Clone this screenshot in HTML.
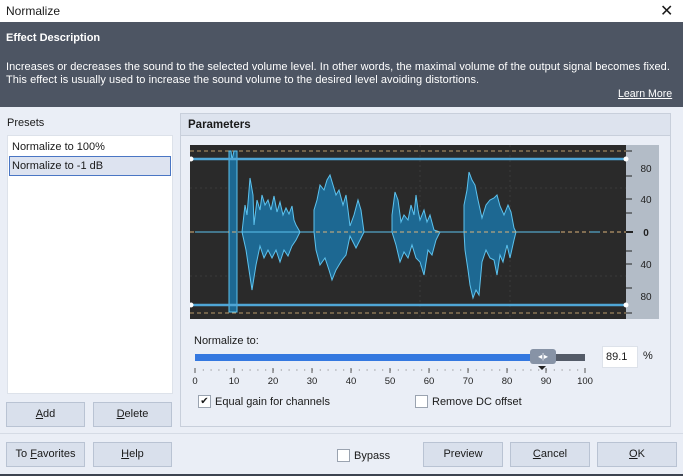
<!DOCTYPE html>
<html><head><meta charset="utf-8"><style>
*{box-sizing:border-box;margin:0;padding:0}
body{width:683px;height:476px;overflow:hidden;background:#eaeef6;font-family:"Liberation Sans",sans-serif;font-size:11px;color:#1a1a1a;position:relative}
.abs{position:absolute}
.btn{position:absolute;background:#d9e0ec;border:1px solid #b9c3d3;text-align:center;line-height:23px;font-size:11px}
u{text-decoration:underline}
.cb{position:absolute;width:13px;height:13px;background:#fff;border:1px solid #9aa3b0}
</style></head><body>
<div class="abs" style="left:0;top:0;width:683px;height:22px;background:#fff"></div>
<div class="abs" style="left:6px;top:4px;font-size:12px">Normalize</div>
<div class="abs" style="left:660px;top:1px;font-size:16px;font-weight:300">✕</div>
<div class="abs" style="left:0;top:22px;width:683px;height:85px;background:#4d5563;color:#fff">
 <div class="abs" style="left:6px;top:10px;font-weight:bold;font-size:11px">Effect Description</div>
 <div class="abs" style="left:6px;top:39px;line-height:13px;font-size:11px;white-space:nowrap;letter-spacing:0.05px">Increases or decreases the sound to the selected volume level. In other words, the maximal volume of the output signal becomes fixed.<br>This effect is usually used to increase the sound volume to the desired level avoiding distortions.</div>
 <div class="abs" style="left:618px;top:66px;text-decoration:underline;font-size:10.6px">Learn More</div>
</div>
<div class="abs" style="left:7px;top:117px">Presets</div>
<div class="abs" style="left:7px;top:135px;width:166px;height:259px;background:#fff;border:1px solid #dde2ea"></div>
<div class="abs" style="left:12px;top:141px">Normalize to 100%</div>
<div class="abs" style="left:9px;top:156px;width:162px;height:20px;background:#dde3f0;border:1px solid #4a76c4;padding:3px 2px">Normalize to -1 dB</div>
<div class="btn" style="left:6px;top:402px;width:79px;height:25px"><u>A</u>dd</div>
<div class="btn" style="left:93px;top:402px;width:79px;height:25px"><u>D</u>elete</div>
<div class="abs" style="left:180px;top:113px;width:491px;height:314px;border:1px solid #c8cfdb"></div>
<div class="abs" style="left:181px;top:114px;width:489px;height:22px;background:#dde3ee;border-bottom:1px solid #c8cfdb;font-weight:bold;font-size:11.5px;padding:5px 7px">Parameters</div>
<svg class="abs" style="left:190px;top:145px" width="470" height="175" viewBox="190 145 470 175">
<rect x="190" y="145" width="436" height="174" fill="#2a2a2a"/>
<rect x="626" y="145" width="33" height="174" fill="#b3bcc7"/>
<g stroke="#3a3a3a" stroke-dasharray="2 3"><line x1="190" y1="188" x2="626" y2="188"/><line x1="190" y1="276" x2="626" y2="276"/><line x1="420" y1="145" x2="420" y2="319"/><line x1="510" y1="145" x2="510" y2="319"/></g>
<g stroke="#b89a6a" stroke-dasharray="4 3"><line x1="190" y1="151" x2="626" y2="151"/><line x1="190" y1="313" x2="626" y2="313"/></g>
<path d="M242 232 L245 205 L247 215 L250 178 L253 195 L254 225 L257 200 L260 210 L262 195 L265 205 L268 200 L271 210 L274 196 L277 212 L280 202 L283 215 L286 208 L289 214 L292 206 L294 220 L296 225 L300 232 L296 240 L292 246 L288 256 L284 250 L280 262 L276 250 L272 258 L268 250 L264 258 L260 246 L256 265 L252 290 L249 270 L246 250 Z
M314 232 L314 210 L317 200 L320 185 L324 190 L327 180 L330 175 L333 185 L336 195 L339 190 L343 205 L346 195 L348 210 L350 226 L354 215 L358 200 L361 210 L364 232 L360 240 L356 248 L350 236 L346 255 L342 260 L339 265 L336 270 L332 280 L329 270 L325 258 L320 265 L316 250 Z
M392 232 L392 215 L395 192 L398 200 L401 222 L404 215 L408 220 L411 205 L414 215 L416 195 L418 210 L420 220 L424 210 L427 222 L430 215 L434 230 L440 232 L436 240 L432 255 L428 250 L424 275 L420 262 L416 258 L412 245 L408 258 L404 252 L400 262 L396 245 Z
M464 232 L464 205 L467 190 L469 172 L472 180 L475 185 L478 200 L482 218 L486 205 L490 200 L494 198 L497 195 L500 206 L504 215 L508 205 L511 212 L514 228 L516 232 L514 240 L510 258 L507 245 L503 262 L500 255 L497 275 L494 260 L490 258 L486 250 L482 262 L479 295 L476 290 L473 298 L470 285 L468 270 L465 250 Z" fill="#1d6892" stroke="#5cc2ee" stroke-width="1"/>
<path d="M229 151 L231 151 L232 160 L234 151 L237 151 L237 312 L229 312 Z" fill="#1d6892" stroke="#5cc2ee"/>
<line x1="190" y1="232" x2="626" y2="232" stroke="#d9b27a" stroke-dasharray="4 3"/>
<path d="M195 232 L228 232 M238 232 L314 232 M364 232 L392 232 M440 232 L464 232 M516 232 L560 232 M590 232 L600 232" stroke="#5cc2ee" stroke-width="1"/>
<line x1="190" y1="159" x2="626" y2="159" stroke="#4fa6d6" stroke-width="2.5"/>
<line x1="190" y1="305" x2="626" y2="305" stroke="#4fa6d6" stroke-width="2.5"/>
<circle cx="191" cy="159" r="2.5" fill="#fff"/><circle cx="626" cy="159" r="2.5" fill="#fff"/>
<circle cx="191" cy="305" r="2.5" fill="#fff"/><circle cx="626" cy="305" r="2.5" fill="#fff"/>
<g stroke="#222"><line x1="626" y1="151" x2="632" y2="151"/><line x1="626" y1="176" x2="632" y2="176"/><line x1="626" y1="199" x2="632" y2="199"/><line x1="626" y1="213" x2="632" y2="213"/><line x1="626" y1="232" x2="633" y2="232" stroke-width="2"/><line x1="626" y1="251" x2="632" y2="251"/><line x1="626" y1="264" x2="632" y2="264"/><line x1="626" y1="288" x2="632" y2="288"/><line x1="626" y1="313" x2="632" y2="313"/></g>
<g font-family="Liberation Sans" font-size="10" fill="#222" text-anchor="middle"><text x="646" y="172">80</text><text x="646" y="203">40</text><text x="646" y="236" font-weight="bold">0</text><text x="646" y="268">40</text><text x="646" y="300">80</text></g>
</svg>
<div class="abs" style="left:194px;top:335px">Normalize to:</div>
<div class="abs" style="left:195px;top:354px;width:390px;height:7px;background:#545b68"></div>
<div class="abs" style="left:195px;top:354px;width:340px;height:7px;background:#3478e0"></div>
<div class="abs" style="left:530px;top:349px;width:26px;height:15px;background:#8793a6;border-radius:3px;color:#fff;font-size:8px;text-align:center;line-height:15px">◂|▸</div>
<svg class="abs" style="left:190px;top:366px" width="410" height="24">
<g stroke="#555">
<line x1="5" y1="2" x2="5" y2="7"/><line x1="44" y1="2" x2="44" y2="7"/><line x1="83" y1="2" x2="83" y2="7"/><line x1="122" y1="2" x2="122" y2="7"/><line x1="161" y1="2" x2="161" y2="7"/><line x1="200" y1="2" x2="200" y2="7"/><line x1="239" y1="2" x2="239" y2="7"/><line x1="278" y1="2" x2="278" y2="7"/><line x1="317" y1="2" x2="317" y2="7"/><line x1="356" y1="2" x2="356" y2="7"/><line x1="395" y1="2" x2="395" y2="7"/>
</g>
<g stroke="#777" stroke-dasharray="1 6.8"><line x1="12.8" y1="4" x2="395" y2="4"/></g>
<path d="M348 0 L356 0 L352 4Z" fill="#222"/>
<g font-family="Liberation Sans" font-size="9.5" fill="#222" text-anchor="middle"><text x="5" y="18">0</text><text x="44" y="18">10</text><text x="83" y="18">20</text><text x="122" y="18">30</text><text x="161" y="18">40</text><text x="200" y="18">50</text><text x="239" y="18">60</text><text x="278" y="18">70</text><text x="317" y="18">80</text><text x="356" y="18">90</text><text x="395" y="18">100</text></g>
</svg>
<div class="abs" style="left:602px;top:346px;width:36px;height:22px;background:#fff;border:1px solid #dde2ea;padding:4px 3px">89.1</div>
<div class="abs" style="left:643px;top:350px">%</div>
<div class="cb" style="left:198px;top:395px;font-size:10px;line-height:11px;text-align:center">✔</div>
<div class="abs" style="left:215px;top:396px">Equal gain for channels</div>
<div class="cb" style="left:415px;top:395px"></div>
<div class="abs" style="left:432px;top:396px">Remove DC offset</div>
<div class="abs" style="left:0;top:433px;width:683px;height:1px;background:#d5dbe5"></div>
<div class="btn" style="left:6px;top:442px;width:79px;height:25px">To <u>F</u>avorites</div>
<div class="btn" style="left:93px;top:442px;width:79px;height:25px"><u>H</u>elp</div>
<div class="cb" style="left:337px;top:449px"></div>
<div class="abs" style="left:354px;top:450px">Bypass</div>
<div class="btn" style="left:423px;top:442px;width:80px;height:25px">Preview</div>
<div class="btn" style="left:510px;top:442px;width:80px;height:25px"><u>C</u>ancel</div>
<div class="btn" style="left:597px;top:442px;width:80px;height:25px"><u>O</u>K</div>
<div class="abs" style="left:0;top:474px;width:683px;height:2px;background:#3c4350"></div>
</body></html>
